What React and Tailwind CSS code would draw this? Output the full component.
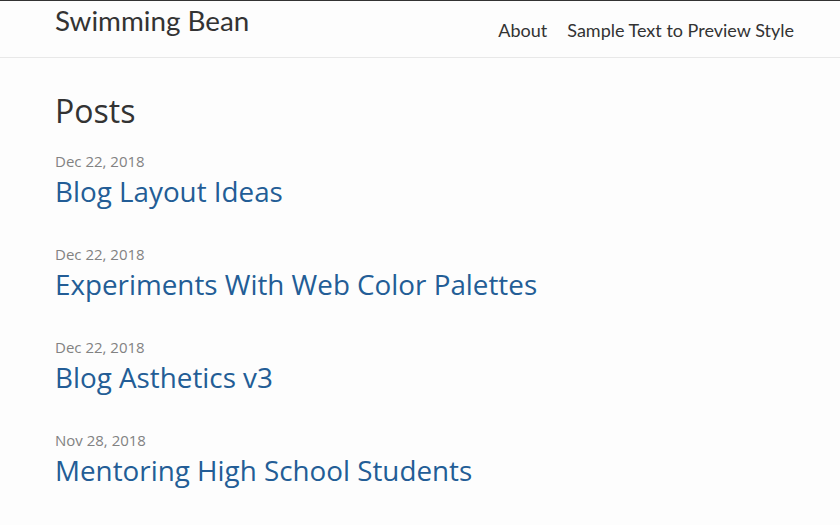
export default function App() {
  const posts = [
    { date: "Dec 22, 2018", title: "Blog Layout Ideas" },
    { date: "Dec 22, 2018", title: "Experiments With Web Color Palettes" },
    { date: "Dec 22, 2018", title: "Blog Asthetics v3" },
    { date: "Nov 28, 2018", title: "Mentoring High School Students" },
  ];

  return (
    <div className="min-h-screen bg-[#fdfdfd] border-t border-[#333333]">
      {/* Site header */}
      <header className="h-[57px] border-b border-[#e8e8e8]">
        <div className="flex justify-between pl-[55px] pr-[46px] font-['Lato',sans-serif] text-[#333333]">
          <a href="#" className="block pt-[3px] text-[27.8px] leading-[34px]">
            Swimming Bean
          </a>
          <nav className="flex gap-[20px] pt-[17px] text-[18px] leading-[24px]">
            <a href="#">About</a>
            <a href="#">Sample Text to Preview Style</a>
          </nav>
        </div>
      </header>

      {/* Posts list */}
      <main className="pl-[55px] pr-[46px] pt-[35px] font-['Open_Sans',sans-serif]">
        <h1 className="text-[32px] leading-[36px] text-[#333333]">Posts</h1>
        <ul className="mt-[22px]">
          {posts.map((p) => (
            <li key={p.title} className="mb-[33px]">
              <div className="text-[15px] font-medium leading-[20px] text-[#828282]">
                {p.date}
              </div>
              <a href="#" className="block text-[27.8px] leading-[40px] text-[#235d96]">
                {p.title}
              </a>
            </li>
          ))}
        </ul>
      </main>
    </div>
  );
}
